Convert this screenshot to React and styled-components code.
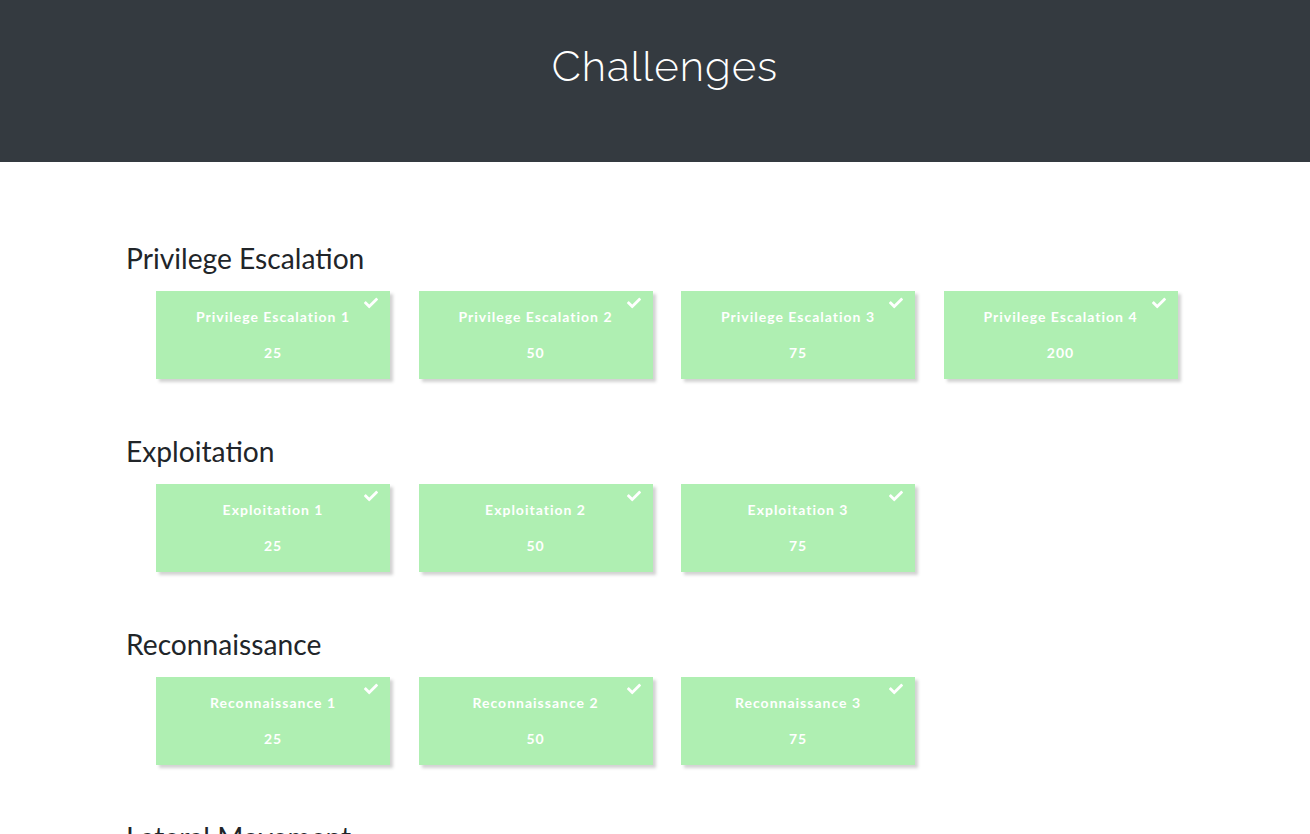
import styled, { createGlobalStyle } from "styled-components";

const GlobalStyle = createGlobalStyle`
    body {
        margin: 0;
        background: #ffffff;
        font-family: Lato, "Liberation Sans", sans-serif;
        color: #212529;
    }
`;

const Jumbotron = styled.div`
    background-color: #343a40;
    height: 162px;
    display: flex;
    justify-content: center;
    padding: 40px 0 0 20px;
    box-sizing: border-box;
`;
const PageTitle = styled.h1`
    margin: 0;
    color: #ffffff;
    font-family: Raleway, "Open Sans", Lato, sans-serif;
    font-weight: 300;
    font-size: 42px;
    line-height: 54px;
    letter-spacing: 1px;
`;
const Main = styled.div`
    padding: 79px 0 0 126px;
`;
const Category = styled.div`
    margin-bottom: 55px;
`;
const CategoryTitle = styled.h3`
    margin: 0 0 16px;
    font-size: 28.2px;
    font-weight: 400;
    line-height: 34px;
`;
const Grid = styled.div`
    display: grid;
    grid-template-columns: repeat(4, 234px);
    column-gap: 28.5px;
    row-gap: 20px;
    padding-left: 30px;
`;
const Card = styled.div`
    position: relative;
    height: 88px;
    box-sizing: border-box;
    padding-top: 16px;
    background-color: ${p => (p.solved ? "#afefb2" : "#343a40")};
    box-shadow: 3px 3px 3px rgba(0, 0, 0, 0.18);
    color: #ffffff;
    text-align: center;
    font-weight: 700;
    font-size: 14px;
    letter-spacing: 1px;
    cursor: pointer;
`;
const CardName = styled.div`
    line-height: 20px;
`;
const CardValue = styled.div`
    margin-top: 16px;
    line-height: 20px;
`;
const Check = styled.svg`
    position: absolute;
    top: 5px;
    right: 12px;
    width: 14px;
    height: 14px;
    fill: #ffffff;
`;

const categories = [
    {
        name: "Privilege Escalation",
        items: [
            ["Privilege Escalation 1", 25],
            ["Privilege Escalation 2", 50],
            ["Privilege Escalation 3", 75],
            ["Privilege Escalation 4", 200],
        ],
    },
    {
        name: "Exploitation",
        items: [
            ["Exploitation 1", 25],
            ["Exploitation 2", 50],
            ["Exploitation 3", 75],
        ],
    },
    {
        name: "Reconnaissance",
        items: [
            ["Reconnaissance 1", 25],
            ["Reconnaissance 2", 50],
            ["Reconnaissance 3", 75],
        ],
    },
    {
        name: "Lateral Movement",
        items: [
            ["Lateral Movement 1", 25],
            ["Lateral Movement 2", 50],
        ],
    },
];

function App() {
    return (
        <>
            <GlobalStyle />
            <Jumbotron>
                <PageTitle>Challenges</PageTitle>
            </Jumbotron>
            <Main>
                {categories.map(cat => (
                    <Category key={cat.name}>
                        <CategoryTitle>{cat.name}</CategoryTitle>
                        <Grid>
                            {cat.items.map(([name, value]) => (
                                <Card key={name} solved>
                                    <Check viewBox="0 0 512 512">
                                        <path d="M173.898 439.404l-166.4-166.4c-9.997-9.997-9.997-26.206 0-36.204l36.203-36.204c9.997-9.998 26.207-9.998 36.204 0L192 312.69 432.095 72.596c9.997-9.997 26.207-9.997 36.204 0l36.203 36.204c9.997 9.997 9.997 26.206 0 36.204l-294.4 294.401c-9.998 9.997-26.207 9.997-36.204-.001z" />
                                    </Check>
                                    <CardName>{name}</CardName>
                                    <CardValue>{value}</CardValue>
                                </Card>
                            ))}
                        </Grid>
                    </Category>
                ))}
            </Main>
        </>
    );
}

export default App;
